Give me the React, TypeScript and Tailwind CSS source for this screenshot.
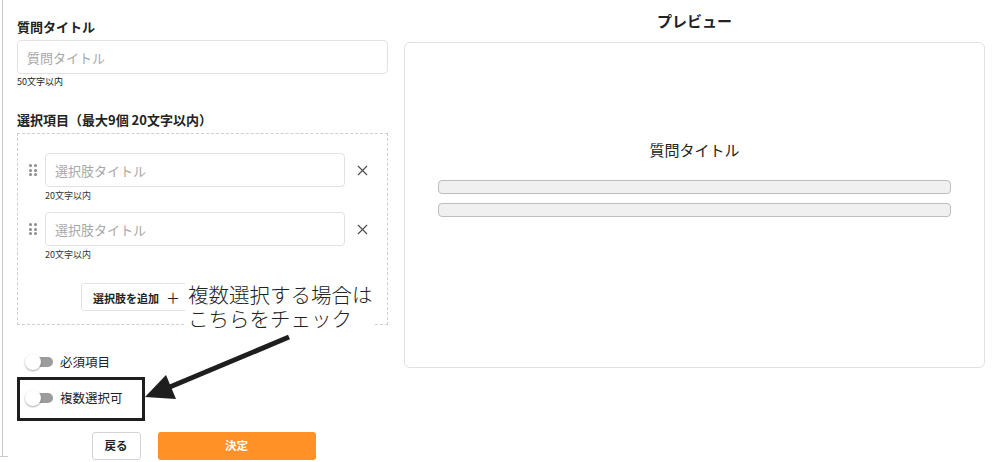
import { X } from "lucide-react";

const font = { fontFamily: '"Noto Sans CJK JP", "Noto Sans", sans-serif' };

function DragHandle() {
  return (
    <div className="grid grid-cols-2 gap-x-[2px] gap-y-[1.5px] w-[8px] shrink-0">
      {[0, 1, 2, 3, 4, 5].map((i) => (
        <span key={i} className="block w-[3px] h-[3px] rounded-full bg-[#8a8a8a]" />
      ))}
    </div>
  );
}

function ChoiceRow() {
  return (
    <div>
      <div className="flex items-center">
        <DragHandle />
        <input
          placeholder="選択肢タイトル"
          className="ml-[8px] w-[300px] h-[34px] rounded-[4px] border border-[#e2e2e2] px-[9px] text-[13px] text-[#333] placeholder:text-[#a8a8a8] outline-none"
        />
        <X className="ml-[9px] text-[#4a4a4a]" size={17} strokeWidth={1.6} />
      </div>
      <p className="ml-[16px] mt-[3px] text-[9px] leading-[12px] text-[#333]">20文字以内</p>
    </div>
  );
}

function Toggle({ label }: { label: string }) {
  return (
    <div className="flex items-center h-[20px] pl-[8px]">
      <div className="relative w-[28px] h-[16px]">
        <span className="absolute left-[2px] right-0 top-[3px] h-[10px] rounded-full bg-[#9c9c9c]" />
        <span className="absolute left-0 top-0 w-[16px] h-[16px] rounded-full bg-white shadow-[0_1px_2px_rgba(0,0,0,0.35)]" />
      </div>
      <span className="ml-[7px] text-[12.5px] text-[#222]">{label}</span>
    </div>
  );
}

export default function App() {
  return (
    <div className="relative flex w-[999px] h-[462px] bg-white overflow-hidden text-[#222]" style={font}>
      {/* left: form */}
      <div className="ml-[2px] w-[398px] h-[456px] border-l border-[#c9c9c9] pl-[14px] pt-[18px]">
        <div className="w-[371px]">
          <h3 className="text-[13px] leading-[18px] font-bold">質問タイトル</h3>
          <input
            placeholder="質問タイトル"
            className="mt-[4px] w-full h-[34px] rounded-[4px] border border-[#e2e2e2] px-[9px] text-[13px] placeholder:text-[#a8a8a8] outline-none"
          />
          <p className="mt-[2px] text-[9px] leading-[12px]">50文字以内</p>

          <h3 className="mt-[23px] text-[13px] leading-[18px] font-bold">選択項目（最大9個 20文字以内）</h3>
          <div className="mt-[4px] h-[192px] border border-dashed border-[#cfcfcf] pl-[11px] pt-[19px]">
            <ChoiceRow />
            <div className="mt-[10px]">
              <ChoiceRow />
            </div>
            <button className="mt-[22px] ml-[52px] h-[28px] w-[120px] rounded-[3px] border border-[#e2e2e2] bg-white pl-[11px] text-left text-[11px] font-bold">
              選択肢を追加<span className="ml-[7px] font-normal text-[14px]">＋</span>
            </button>
          </div>

          <div className="mt-[27px]">
            <Toggle label="必須項目" />
          </div>
          <div className="mt-[16px]">
            <Toggle label="複数選択可" />
          </div>

          <div className="mt-[24px] flex justify-center gap-[17px] pl-[2px]">
            <button className="w-[49px] h-[28px] rounded-[3px] border border-[#d4d4d4] bg-white text-[11.5px] font-bold">
              戻る
            </button>
            <button className="w-[158px] h-[28px] rounded-[3px] bg-[#ff9127] text-white text-[11.5px] font-bold">
              決定
            </button>
          </div>
        </div>
      </div>
      <span className="absolute left-0 top-[456px] w-[8px] h-px bg-[#c9c9c9]" />

      {/* right: preview */}
      <div className="ml-[4px] w-[581px] pt-[12px]">
        <h2 className="text-center text-[15px] leading-[18px] font-bold">プレビュー</h2>
        <div className="mt-[12px] h-[326px] rounded-[6px] border border-[#e1e1e1] px-[33px] pt-[97px]">
          <p className="text-center text-[15px] leading-[20px]">質問タイトル</p>
          <div className="mt-[20px] h-[14px] rounded-[4px] border border-[#bdbdbd] bg-[#f0f0f0]" />
          <div className="mt-[9px] h-[14px] rounded-[4px] border border-[#bdbdbd] bg-[#f0f0f0]" />
        </div>
      </div>

      {/* annotation overlay */}
      <div className="absolute left-[185px] top-[282px] bg-white pl-[3px] pr-[2px] pb-[2px] text-[20.5px] leading-[24px] font-light text-[#222]">
        <p>複数選択する場合は</p>
        <p>こちらをチェック</p>
      </div>
      <div className="absolute left-[17px] top-[377px] w-[128px] h-[44px] border-[3px] border-[#1e1e1e]" />
      <svg className="absolute left-0 top-0" width="999" height="462" viewBox="0 0 999 462">
        <line x1="289" y1="337" x2="165" y2="389" stroke="#1e1e1e" strokeWidth="5" />
        <polygon points="145,397 166,375 176,399" fill="#1e1e1e" />
      </svg>
    </div>
  );
}
